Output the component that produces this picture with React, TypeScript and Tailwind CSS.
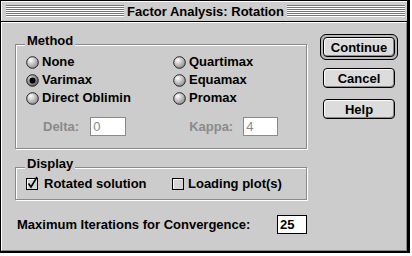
import React from "react";

const font = { fontFamily: '"Liberation Sans", Arial, sans-serif' };

function Radio({ checked }: { checked?: boolean }) {
  return (
    <svg width="13" height="13" viewBox="0 0 13 13" className="shrink-0">
      <defs>
        <radialGradient id="rg" cx="35%" cy="30%" r="75%">
          <stop offset="0%" stopColor="#ffffff" />
          <stop offset="100%" stopColor="#8a8a8a" />
        </radialGradient>
        <radialGradient id="rgd" cx="35%" cy="30%" r="75%">
          <stop offset="0%" stopColor="#d8d8d8" />
          <stop offset="100%" stopColor="#5a5a5a" />
        </radialGradient>
      </defs>
      <circle cx="6.5" cy="6.5" r="5.8" fill={checked ? "url(#rgd)" : "url(#rg)"} stroke="#222" strokeWidth="1" />
      {checked && <circle cx="6.5" cy="6.5" r="3" fill="#000" />}
    </svg>
  );
}

function Check({ checked }: { checked?: boolean }) {
  return (
    <svg width="15" height="15" viewBox="0 0 15 15" className="shrink-0 overflow-visible">
      <rect x="0.5" y="2.5" width="11" height="11" fill="#d4d4d4" stroke="#000" />
      <path d="M1.5 12.5 V3.5 H10.5" stroke="#fff" fill="none" />
      {checked && <path d="M2.5 7.5 L5 11 L11 1" stroke="#000" strokeWidth="1.6" fill="none" />}
    </svg>
  );
}

function Btn({ label, h = "h-[20px]" }: { label: string; h?: string }) {
  return (
    <div
      className={`w-[72px] ${h} border border-black rounded-[4px] bg-[#dcdcdc] shadow-[inset_1px_1px_0_#fff,inset_-1px_-1px_0_#8a8a8a] flex items-center justify-center text-[13px] font-bold text-black leading-none`}
    >
      {label}
    </div>
  );
}

function Group({ label, className, children }: { label: string; className: string; children: React.ReactNode }) {
  return (
    <div className="relative">
      <div className={`border border-[#8a8a8a] shadow-[1px_1px_0_#fff,inset_1px_1px_0_#fff] ${className}`}>{children}</div>
      <span className="absolute left-[10px] -top-[11px] px-[2px] bg-[#cccccc] text-[13px] leading-[16px] font-bold text-black">
        {label}
      </span>
    </div>
  );
}

export default function App() {
  return (
    <div className="w-[412px] h-[256px] bg-white" style={font}>
      <div className="w-[410px] h-[253px] border-l border-t border-r-[3px] border-b-[2px] border-black bg-[#cccccc] flex flex-col">
        {/* title bar */}
        <div className="h-[21px] border-b border-black flex items-center pl-[5px] pr-[2px] bg-[#cecece] shadow-[inset_1px_1px_0_#fff]">
          <div className="flex-1 h-[12px] bg-[repeating-linear-gradient(to_bottom,#777_0px,#777_1px,#fff_1px,#fff_2px)]" />
          <div className="px-[3px] text-[13px] font-bold leading-none text-black whitespace-nowrap">Factor Analysis: Rotation</div>
          <div className="flex-1 h-[12px] bg-[repeating-linear-gradient(to_bottom,#777_0px,#777_1px,#fff_1px,#fff_2px)]" />
        </div>
        {/* body */}
        <div className="flex-1 flex border-l border-t border-white border-r border-b border-r-[#8a8a8a] border-b-[#8a8a8a] pl-[13px]">
          <div className="w-[292px] flex flex-col">
            <div className="mt-[21px]">
              <Group label="Method" className="h-[105px] pt-[8px]">
                <div className="flex">
                  <div className="w-[157px] pl-[10px] flex flex-col">
                    {[
                      ["None", false],
                      ["Varimax", true],
                      ["Direct Oblimin", false],
                    ].map(([l, c]) => (
                      <div key={l as string} className="h-[18px] flex items-center gap-[3px] text-[13px] font-bold text-black">
                        <Radio checked={c as boolean} />
                        <span>{l as string}</span>
                      </div>
                    ))}
                  </div>
                  <div className="flex flex-col">
                    {["Quartimax", "Equamax", "Promax"].map((l) => (
                      <div key={l} className="h-[18px] flex items-center gap-[3px] text-[13px] font-bold text-black">
                        <Radio />
                        <span>{l}</span>
                      </div>
                    ))}
                  </div>
                </div>
                <div className="mt-[10px] h-[19px] flex items-center pl-[27px] text-[13px] font-bold text-[#8a8a8a]">
                  <span>Delta:</span>
                  <div className="ml-[11px] w-[36px] h-[19px] bg-white border border-[#8a8a8a] flex items-center pl-[2px] font-normal">0</div>
                  <span className="ml-[63px]">Kappa:</span>
                  <div className="ml-[10px] w-[35px] h-[19px] bg-white border border-[#8a8a8a] flex items-center pl-[2px] font-normal">4</div>
                </div>
              </Group>
            </div>
            <div className="mt-[18px]">
              <Group label="Display" className="h-[33px] flex items-center">
                <div className="w-[156px] pl-[10px] flex items-center gap-[3px] text-[13px] font-bold text-black">
                  <Check checked />
                  <span>Rotated solution</span>
                </div>
                <div className="flex items-center gap-[1px] text-[13px] font-bold text-black">
                  <Check />
                  <span>Loading plot(s)</span>
                </div>
              </Group>
            </div>
            <div className="mt-[15px] flex items-center h-[19px] pl-[2px] text-[13px] font-bold text-black">
              <span>Maximum Iterations for Convergence:</span>
              <div className="ml-auto w-[30px] h-[19px] bg-white border border-black flex items-center pl-[2px]">25</div>
            </div>
          </div>
          <div className="ml-[13px] flex flex-col items-start">
            <div className="mt-[11px] p-[2px] border border-black rounded-[6px] bg-[#b8b8b8]">
              <Btn label="Continue" />
            </div>
            <div className="mt-[8px] ml-[3px]">
              <Btn label="Cancel" />
            </div>
            <div className="mt-[11px] ml-[3px]">
              <Btn label="Help" />
            </div>
          </div>
        </div>
      </div>
    </div>
  );
}
